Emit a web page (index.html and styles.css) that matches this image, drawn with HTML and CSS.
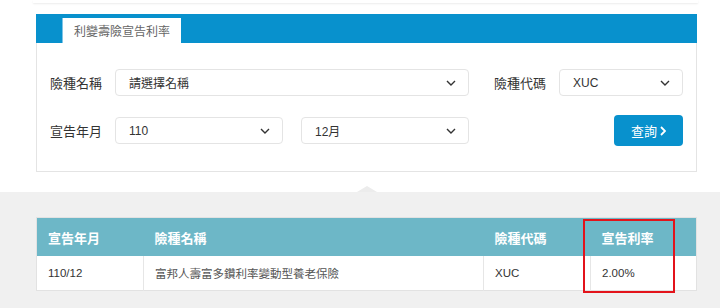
FILE: index.html
```html
<!DOCTYPE html>
<html lang="zh-Hant">
<head>
    <meta charset="UTF-8">
    <meta name="viewport" content="width=device-width, initial-scale=1.0">
    <title>利變壽險宣告利率</title>
    <link rel="stylesheet" href="styles.css">
</head>
<body>
    <div class="search-area">
        <div class="prev-card"></div>

        <div class="panel">
            <div class="panel-head">
                <div class="tab">利變壽險宣告利率</div>
            </div>
            <div class="panel-body">
                <div class="form-row">
                    <label class="label">險種名稱</label>
                    <div class="select select-name">
                        <span>請選擇名稱</span>
                        <svg class="chevron" viewBox="0 0 10 6"><path d="M1 1l4 4 4-4"/></svg>
                    </div>
                    <label class="label label-code">險種代碼</label>
                    <div class="select select-code">
                        <span>XUC</span>
                        <svg class="chevron" viewBox="0 0 10 6"><path d="M1 1l4 4 4-4"/></svg>
                    </div>
                </div>
                <div class="form-row">
                    <label class="label">宣告年月</label>
                    <div class="select select-half">
                        <span>110</span>
                        <svg class="chevron" viewBox="0 0 10 6"><path d="M1 1l4 4 4-4"/></svg>
                    </div>
                    <div class="select select-half select-month">
                        <span>12月</span>
                        <svg class="chevron" viewBox="0 0 10 6"><path d="M1 1l4 4 4-4"/></svg>
                    </div>
                    <button class="btn-search">查詢
                        <svg class="btn-arrow" viewBox="0 0 6 10"><path d="M1 1l4 4-4 4"/></svg>
                    </button>
                </div>
            </div>
        </div>

        <div class="notch"></div>
    </div>

    <div class="result-area">
        <div class="table-wrap">
            <table class="rate-table">
                <colgroup>
                    <col class="col-date">
                    <col class="col-name">
                    <col class="col-code">
                    <col class="col-rate">
                </colgroup>
                <thead>
                    <tr>
                        <th>宣告年月</th>
                        <th>險種名稱</th>
                        <th>險種代碼</th>
                        <th>宣告利率</th>
                    </tr>
                </thead>
                <tbody>
                    <tr>
                        <td>110/12</td>
                        <td class="name">富邦人壽富多鑽利率變動型養老保險</td>
                        <td>XUC</td>
                        <td>2.00%</td>
                    </tr>
                </tbody>
            </table>
            <!-- highlight box around the rate column -->
            <div class="highlight"></div>
        </div>
    </div>
</body>
</html>
```

FILE: styles.css
```css
body {
    margin: 0;
    font-family: "Liberation Sans", "Noto Sans CJK TC", sans-serif;
    color: #333;
    background: #f0f0f0;
    height: 308px;
    overflow: hidden;
}

/* Search area (white) */
.search-area {
    position: relative;
    background: #fff;
    padding-bottom: 20px;
}

.prev-card {
    height: 3px;
    margin: 0 22px 11px 33px;
    background: #fff;
    box-shadow: 0 1px 2px rgba(0, 0, 0, 0.08);
}

.panel {
    margin: 0 23px 0 36px;
}

.panel-head {
    height: 29px;
    background: #0891cd;
    display: flex;
    align-items: flex-end;
    padding-left: 26px;
}

.tab {
    width: 118px;
    height: 25px;
    background: #fff;
    border-left: 1px solid #7fc4e6;
    font-size: 12px;
    color: #666;
    text-align: center;
    line-height: 28px;
}

.panel-body {
    border: 1px solid #e4e4e4;
    border-top: none;
    padding: 24px 13px 25px 13px;
    display: flex;
    flex-direction: column;
    gap: 17px;
}

.form-row {
    display: flex;
    align-items: center;
    height: 31px;
}

.label {
    width: 65px;
    font-size: 13px;
    color: #333;
}

.label-code {
    margin-left: 25px;
}

.select {
    box-sizing: border-box;
    height: 27px;
    border: 1px solid #e4e4e4;
    border-radius: 4px;
    display: flex;
    align-items: center;
    justify-content: space-between;
    padding: 0 12px 0 13px;
    font-size: 12px;
    color: #333;
}

.select-name {
    width: 354px;
}

.select-code {
    width: 124px;
}

.select-half {
    width: 168px;
}

.select-month {
    margin-left: 18px;
}

.chevron {
    width: 10px;
    height: 6px;
    fill: none;
    stroke: #333;
    stroke-width: 1.4;
}

.btn-search {
    margin-left: auto;
    width: 69px;
    height: 31px;
    border: none;
    border-radius: 4px;
    background: #0891cd;
    color: #fff;
    font-family: "Liberation Sans", "Noto Sans CJK TC", sans-serif;
    font-size: 13px;
    display: flex;
    align-items: center;
    justify-content: center;
    gap: 3px;
    padding: 0;
}

.btn-arrow {
    width: 6px;
    height: 10px;
    fill: none;
    stroke: #fff;
    stroke-width: 1.8;
}

.notch {
    position: absolute;
    bottom: 0;
    left: 357px;
    width: 0;
    height: 0;
    border-left: 10px solid transparent;
    border-right: 10px solid transparent;
    border-bottom: 6px solid #ececec;
}

/* Result table */
.result-area {
    padding: 25px 23px 0 36px;
}

.table-wrap {
    position: relative;
}

.rate-table {
    width: 100%;
    table-layout: fixed;
    border-collapse: collapse;
    background: #fff;
    border: 1px solid #e2e2e2;
    font-size: 11.5px;
}

.col-date { width: 107px; }
.col-name { width: 340px; }
.col-code { width: 107px; }
.col-rate { width: auto; }

.rate-table th {
    background: #6db7c7;
    color: #fff;
    font-size: 13px;
    font-weight: bold;
    text-align: left;
    height: 38px;
    padding: 0 0 0 11px;
}

.rate-table td {
    height: 34px;
    padding: 0 0 0 11px;
    border-right: 1px solid #e6e6e6;
    color: #333;
}

.rate-table td:last-child {
    border-right: none;
}

.rate-table td.name {
    color: #555;
}

.highlight {
    position: absolute;
    left: 547px;
    top: 2px;
    width: 88px;
    height: 70px;
    border: 2px solid #e3131b;
}
```
